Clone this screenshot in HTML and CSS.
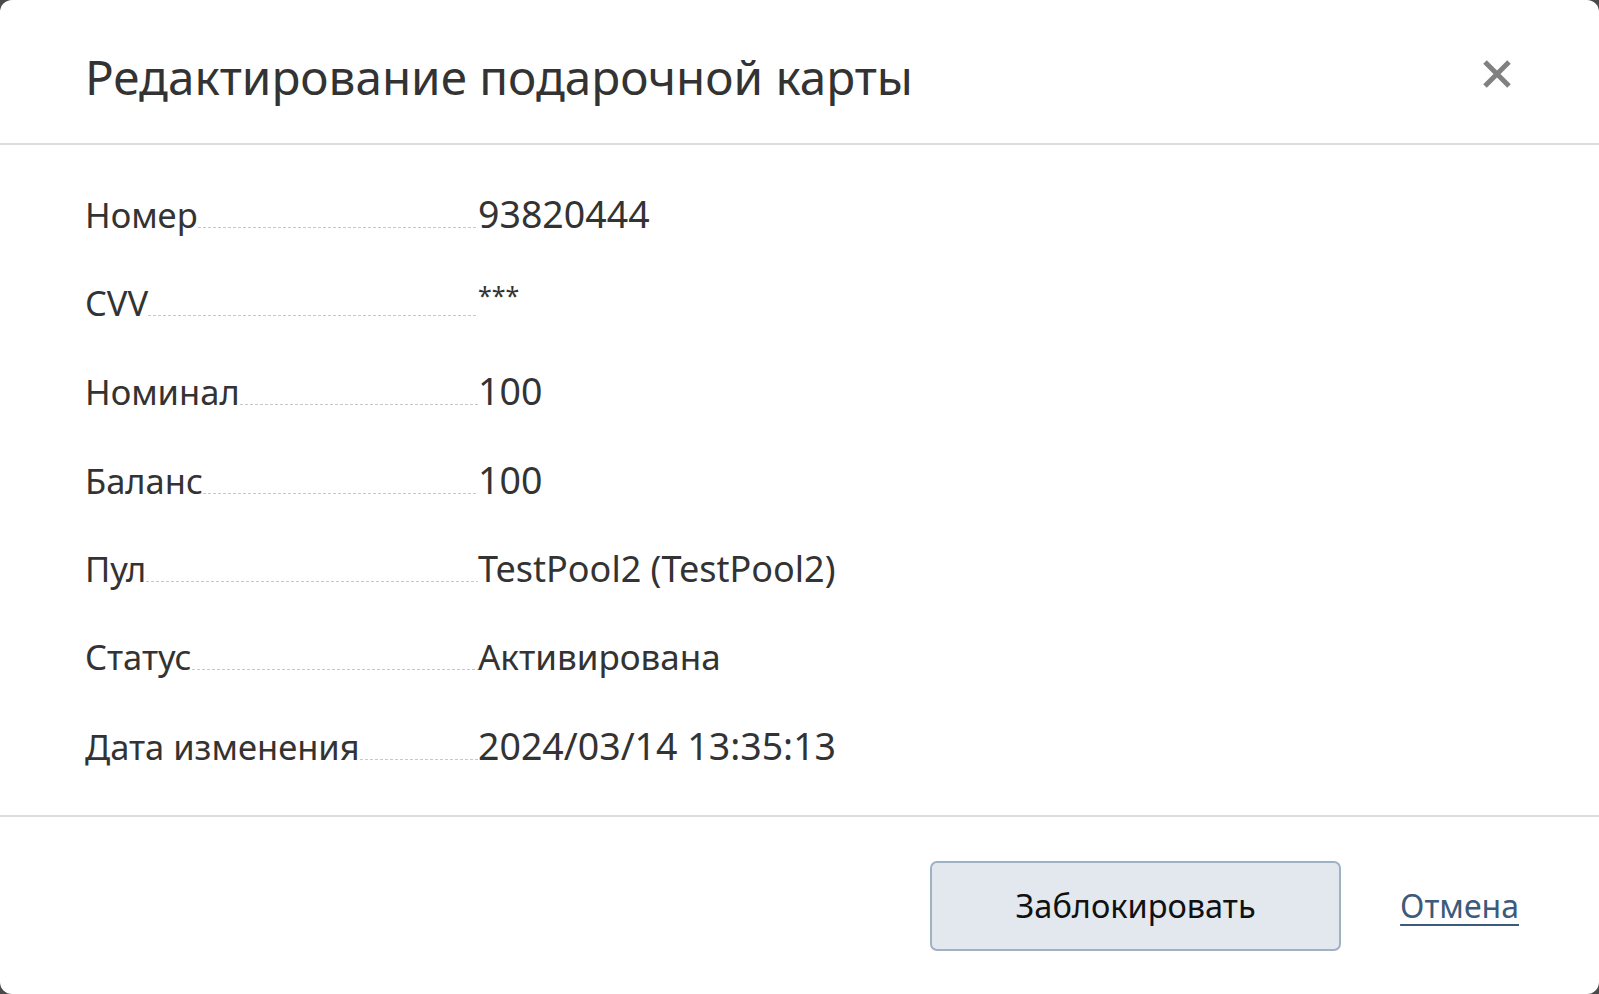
FILE: index.html
```html
<!DOCTYPE html>
<html>
<head>
  <title>Редактирование подарочной карты</title>
  <meta charset="utf-8">
  <link rel="stylesheet" href="styles.css">
</head>
<body>
  <div class="modal">
    <div class="modal-header">
      <h1>Редактирование подарочной карты</h1>
      <span class="close">
        <svg width="32" height="32" viewBox="0 0 32 32"><path d="M4 4 L28 28 M28 4 L4 28" stroke="#808080" stroke-width="5" fill="none"/></svg>
      </span>
    </div>
    <div class="modal-body">
      <div class="row"><span class="label">Номер</span><span class="value num">93820444</span></div>
      <div class="row"><span class="label">CVV</span><span class="value"><span class="masked">***</span></span></div>
      <div class="row"><span class="label">Номинал</span><span class="value num">100</span></div>
      <div class="row"><span class="label">Баланс</span><span class="value num">100</span></div>
      <div class="row"><span class="label">Пул</span><span class="value">TestPool2 (TestPool2)</span></div>
      <div class="row"><span class="label">Статус</span><span class="value txt">Активирована</span></div>
      <div class="row"><span class="label">Дата изменения</span><span class="value num">2024/03/14 13:35:13</span></div>
    </div>
    <div class="modal-footer">
      <span class="btn">Заблокировать</span>
      <a href="#" class="cancel">Отмена</a>
    </div>
  </div>
</body>
</html>
```
FILE: styles.css
```css
body {
  margin: 0;
  background-color: #4a4a4a;
  font-family: "Noto Sans", "Open Sans", sans-serif;
  color: #333;
}
.modal {
  height: 994px;
  background-color: #fff;
  border-radius: 12px;
  display: flex;
  flex-direction: column;
}
.modal-header {
  height: 145px;
  border-bottom: 2px solid #dcdcdc;
  display: flex;
  align-items: center;
  justify-content: space-between;
  padding: 9px 86px 0 85px;
  box-sizing: border-box;
}
h1 {
  margin: 0;
  font-size: 47.6px;
  font-weight: normal;
}
.close {
  display: flex;
  margin-top: -5px;
}
.modal-body {
  padding: 25px 85px 0 85px;
  height: 672px;
  box-sizing: border-box;
  border-bottom: 2px solid #dcdcdc;
}
.row {
  display: flex;
  align-items: baseline;
  height: 88.7px;
  line-height: 88.7px;
  font-size: 34.5px;
}
.value {
  font-size: 36px;
}
.value.num {
  font-size: 37.5px;
}
.value.txt {
  font-size: 35px;
}
.masked {
  font-size: 25px;
  line-height: 1;
  vertical-align: 11px;
}
.label {
  width: 393px;
  display: flex;
  align-items: baseline;
}
.label::after {
  content: "";
  flex: 1;
  height: 1px;
  background: repeating-linear-gradient(to right, #c8c8c8 0 3px, transparent 3px 5px);
}
.modal-footer {
  flex: 1;
  display: flex;
  align-items: center;
  justify-content: flex-end;
  padding: 0 80px 0 0;
  gap: 59px;
}
.btn {
  width: 411px;
  height: 90px;
  box-sizing: border-box;
  border: 2px solid #9fb1c5;
  border-radius: 7px;
  background-color: #e3e8ee;
  color: #111;
  font-size: 32.5px;
  display: flex;
  align-items: center;
  justify-content: center;
}
.cancel {
  color: #3d5a7a;
  font-size: 32px;
  text-decoration: underline;
  text-decoration-thickness: 2px;
  text-underline-offset: 6px;
}
```
